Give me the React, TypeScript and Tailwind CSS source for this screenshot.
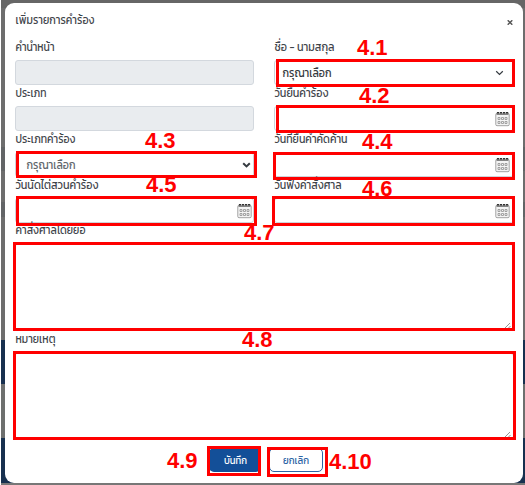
import type { ReactNode } from "react";

const thai = "font-['Kanit','Prompt','Noto_Sans_Thai','Noto_Sans',sans-serif]";

function CalendarIcon() {
  return (
    <svg width="15" height="16" viewBox="0 0 15 16" fill="none" className="shrink-0">
      <rect x="0.8" y="2.3" width="13.4" height="12.4" rx="1.2" fill="#f4f4f4" stroke="#999" strokeWidth="0.9" />
      <path d="M1.5 3.3h12" stroke="#777" strokeWidth="1.2" />
      <path d="M1.9 1.8h2.2M4.9 1.8h2.2M8 1.8h2.2M11 1.8h2.2" stroke="#333" strokeWidth="1.6" />
      <g stroke="#8f8f8f" strokeWidth="0.8">
        <path d="M3 6.5h2v2h-2zM6.5 6.5h2v2h-2zM10 6.5h2v2h-2zM3 10.5h2v2h-2zM6.5 10.5h2v2h-2zM10 10.5h2v2h-2z" />
      </g>
    </svg>
  );
}

function Label({ text, width }: { text: string; width: number }) {
  return (
    <svg width={width} height="21" className="block overflow-visible" aria-label={text}>
      <text x="0.5" y="12" fontSize="12" fill="#3f454b" textLength={width} lengthAdjust="spacingAndGlyphs">
        {text}
      </text>
    </svg>
  );
}

function Field({ text, width, children }: { text: string; width: number; children: ReactNode }) {
  return (
    <div className="h-[46px]">
      <Label text={text} width={width} />
      {children}
    </div>
  );
}

const Disabled = () => <div className="h-[25px] rounded-[3px] border border-[#d3d8de] bg-[#e9ecef]" />;

function DateInput({ left }: { left?: boolean }) {
  return (
    <div
      className={`flex h-[25px] items-center justify-end rounded-[3px] border border-[#ced4da] ${left ? "pr-px" : "pr-[3px]"}`}
    >
      <CalendarIcon />
    </div>
  );
}

function Select({ bold }: { bold?: boolean }) {
  return (
    <div
      className={`flex h-[25px] items-center justify-between rounded-[3px] border border-[#ced4da] ${bold ? "pl-[10px] pr-[2px]" : "pl-[7px] pr-[9px]"}`}
    >
      <svg width="49" height="16" className="overflow-visible">
        <text x="0.5" y="11.5" fontSize="12" fill={bold ? "#60666c" : "#34393e"} textLength="49" lengthAdjust="spacingAndGlyphs">
          กรุณาเลือก
        </text>
      </svg>
      <svg width="9" height="8" viewBox="0 0 9 8" fill="none" stroke="#343a40" strokeWidth={bold ? 2 : 1.2}>
        <path d="M1.2 2.2 4.5 5.4 7.8 2.2" />
      </svg>
    </div>
  );
}

const TextArea = () => (
  <div className="-ml-px flex h-[86px] items-end justify-end rounded-[3px] border border-[#ced4da] pr-0.5">
    <svg width="7" height="7" viewBox="0 0 7 7" stroke="#777" strokeWidth="0.8">
      <path d="M0.5 6.5 6 1M4 6.5 6.5 4" />
    </svg>
  </div>
);

function Callouts() {
  return (
    <>
      {[
        "left-[276px] top-[59px] w-[239px] h-[28px]",
        "left-[276px] top-[105px] w-[239px] h-[28px]",
        "left-[16px] top-[151px] w-[241px] h-[27px]",
        "left-[273px] top-[152px] w-[242px] h-[28px]",
        "left-[16px] top-[196px] w-[241px] h-[30px]",
        "left-[272px] top-[196px] w-[243px] h-[30px]",
        "left-[13px] top-[242px] w-[502px] h-[89px]",
        "left-[13px] top-[351px] w-[503px] h-[89px]",
        "left-[207px] top-[446px] w-[54px] h-[30px]",
        "left-[267px] top-[447px] w-[61px] h-[30px]",
      ].map((c) => (
        <div key={c} className={`absolute border-[3px] border-[#ff0000] ${c}`} />
      ))}
      {[
        ["4.1", "left-[357px] top-[37px]"],
        ["4.2", "left-[359px] top-[85px]"],
        ["4.3", "left-[145px] top-[130px]"],
        ["4.4", "left-[362px] top-[131px]"],
        ["4.5", "left-[146px] top-[174px]"],
        ["4.6", "left-[362px] top-[178px]"],
        ["4.7", "left-[244px] top-[222px]"],
        ["4.8", "left-[242px] top-[329px]"],
        ["4.9", "left-[167px] top-[450px]"],
        ["4.10", "left-[329px] top-[451px]"],
      ].map(([t, c]) => (
        <span
          key={t}
          className={`absolute font-['Liberation_Sans',sans-serif] text-[22px] font-bold leading-[22px] text-[#ff0000] ${c}`}
        >
          {t}
        </span>
      ))}
    </>
  );
}

function Backdrop() {
  return (
    <div className="absolute inset-y-0 left-px right-0 flex flex-col bg-[#6b6b6b]">
      <div className="h-2 bg-[#666]" />
      <div className="h-[139px] bg-[#6d6d6d]" />
      <div className="h-6 bg-[#626466]" />
      <div className="h-[31px] bg-[#6d6d6d]" />
      <div className="h-[15px] bg-[#626466]" />
      <div className="h-[123px] bg-[#6d6d6d]" />
      <div className="h-11 bg-[#17304f]" />
      <div className="h-[54px] bg-[#6d6f6e]" />
      <div className="h-[45px] bg-[#17304f]" />
      <div className="h-0.5 bg-[#777]" />
    </div>
  );
}

export default function App() {
  return (
    <div className={`relative h-[485px] w-[525px] overflow-hidden bg-white ${thai}`}>
      <Backdrop />
      <main className="relative ml-[5px] mr-0.5 mt-[3px] h-[480px] rounded-[9px] bg-white pl-[10px] pr-[9px]">
        <header className="flex h-9 items-start justify-between pt-[9px]">
          <Label text="เพิ่มรายการคำร้อง" width={79} />
          <svg width="6" height="5" viewBox="0 0 6 5" className="mr-px mt-2" fill="none" stroke="#555" strokeWidth="1.5">
            <path d="M0.7 0.3 5.3 4.7M5.3 0.3 0.7 4.7" />
          </svg>
        </header>
        <div className="grid grid-cols-[239px_240px] justify-between">
          <Field text="คำนำหน้า" width={39}><Disabled /></Field>
          <Field text="ชื่อ - นามสกุล" width={60}><Select /></Field>
          <Field text="ประเภท" width={31}><Disabled /></Field>
          <Field text="วันยื่นคำร้อง" width={54}><DateInput /></Field>
          <Field text="ประเภทคำร้อง" width={60}><Select bold /></Field>
          <Field text="วันที่ยื่นคำคัดค้าน" width={73}><DateInput /></Field>
          <Field text="วันนัดไต่สวนคำร้อง" width={83}><DateInput left /></Field>
          <Field text="วันฟังคำสั่งศาล" width={67}><DateInput /></Field>
        </div>
        <div className="-mt-px mb-px">
          <Label text="คำสั่งศาลโดยย่อ" width={70} />
        </div>
        <TextArea />
        <div className="mb-px mt-px">
          <Label text="หมายเหตุ" width={40} />
        </div>
        <TextArea />
        <footer className="ml-[194px] mt-[9px] flex gap-2">
          <button className="flex h-6 w-[52px] items-center justify-center rounded-[5px] bg-[#134f98]">
            <svg width="23" height="16" className="overflow-visible">
              <text x="0" y="12" fontSize="10" fill="#fff" textLength="23" lengthAdjust="spacingAndGlyphs">บันทึก</text>
            </svg>
          </button>
          <button className="flex h-6 w-[54px] items-center justify-center rounded-[5px] border border-[#2c64a5] bg-white">
            <svg width="26" height="16" className="overflow-visible">
              <text x="0" y="12" fontSize="10" fill="#2c64a5" textLength="26" lengthAdjust="spacingAndGlyphs">ยกเลิก</text>
            </svg>
          </button>
        </footer>
      </main>
      <Callouts />
    </div>
  );
}
